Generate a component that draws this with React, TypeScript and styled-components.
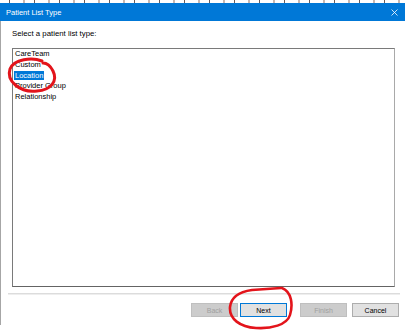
import styled, { createGlobalStyle } from 'styled-components'

const GlobalStyle = createGlobalStyle`
  html, body {
    margin: 0;
    padding: 0;
    background: #ffffff;
  }
  body {
    font-family: "Liberation Sans", Arial, sans-serif;
  }
`

const items = ['CareTeam', 'Custom', 'Location', 'Provider Group', 'Relationship']
const selected = 'Location'

const Screen = styled.div`
  position: relative;
  width: 405px;
  height: 330px;
  overflow: hidden;
  background: #ffffff;
`

const BehindStrip = styled.div`
  height: 3px;
  background: repeating-linear-gradient(
    90deg,
    #ffffff 0px,
    #ffffff 9px,
    #6b5a55 9px,
    #6b5a55 10px,
    #ffffff 10px,
    #ffffff 23px,
    #c9b8b0 23px,
    #c9b8b0 25px
  );
`

const TitleBar = styled.div`
  height: 18px;
  background: #0078d7;
  display: flex;
  align-items: center;
  justify-content: space-between;
  padding: 0 6px;
`

const Title = styled.span`
  color: #ffffff;
  font-size: 7.5px;
`

const CloseIcon = styled.svg`
  width: 7px;
  height: 7px;
  margin-right: 1px;
`

const Dialog = styled.div`
  height: 304px;
  border-left: 1px solid #a6a6a6;
  display: flex;
  flex-direction: column;
`

const Prompt = styled.div`
  font-size: 7.8px;
  line-height: 10px;
  color: #000000;
  margin: 8px 0 0 11px;
`

const ListBox = styled.div`
  height: 237px;
  margin: 9px 10px 0 11px;
  border: 1px solid #7a7a7a;
  border-right-color: #a9a9a9;
  border-bottom-color: #646464;
  display: flex;
  flex-direction: column;
  padding-top: 0px;
`

const Item = styled.div`
  height: 10.8px;
  line-height: 10.8px;
  font-size: 7.5px;
  padding-left: 1px;
  color: #000000;
`

const ItemText = styled.span<{ $active?: boolean }>`
  display: inline-block;
  padding: 0 1px;
  line-height: 9.5px;
  background: ${(p) => (p.$active ? '#0078d7' : 'transparent')};
  color: ${(p) => (p.$active ? '#ffffff' : '#000000')};
`

const Separator = styled.div`
  margin: 6px 5px 0 7px;
  border-top: 1px solid #dcdcdc;
  border-bottom: 1px solid #eeeeee;
`

const ButtonRow = styled.div`
  display: flex;
  justify-content: flex-end;
  margin-top: 8px;
  padding-right: 6px;
`

const Button = styled.div<{ $disabled?: boolean; $default?: boolean; $gap?: number }>`
  width: 47px;
  height: 14px;
  box-sizing: border-box;
  margin-left: ${(p) => p.$gap ?? 0}px;
  display: flex;
  align-items: center;
  justify-content: center;
  font-size: 7px;
  background: ${(p) => (p.$disabled ? '#cccccc' : '#e1e1e1')};
  color: ${(p) => (p.$disabled ? '#a0a0a0' : '#000000')};
  border: 1px solid
    ${(p) => (p.$default ? '#0078d7' : p.$disabled ? '#bfbfbf' : '#adadad')};
`

const Scribble = styled.svg`
  position: absolute;
  left: 0;
  top: 0;
  width: 405px;
  height: 330px;
  pointer-events: none;
`

export default function App() {
  return (
    <>
      <GlobalStyle />
      <Screen>
        <BehindStrip />
        <TitleBar>
          <Title>Patient List Type</Title>
          <CloseIcon viewBox="0 0 7 7">
            <path d="M0.5 0.5 L6.5 6.5 M6.5 0.5 L0.5 6.5" stroke="#ffffff" strokeWidth="0.8" />
          </CloseIcon>
        </TitleBar>
        <Dialog>
          <Prompt>Select a patient list type:</Prompt>
          <ListBox>
            {items.map((name) => (
              <Item key={name}>
                <ItemText $active={name === selected}>{name}</ItemText>
              </Item>
            ))}
          </ListBox>
          <Separator />
          <ButtonRow>
            <Button $disabled>Back</Button>
            <Button $default $gap={2}>Next</Button>
            <Button $disabled $gap={13}>Finish</Button>
            <Button $gap={5}>Cancel</Button>
          </ButtonRow>
        </Dialog>

        {/* red pen marks drawn over the dialog */}
        <Scribble viewBox="0 0 405 330">
          <path
            d="M42 61 C32 57, 14 59, 10 69 C6 81, 20 93, 37 91 C51 90, 58 81, 53 71 C50 65, 46 63, 43 63"
            fill="none"
            stroke="#e3141b"
            strokeWidth="3"
            strokeLinecap="round"
          />
          <path
            d="M282 288 C292 292, 293 305, 290 315 C287 325, 271 329, 256 328 C240 327, 229 319, 230 307 C231 298, 238 292, 252 290 L281 288"
            fill="none"
            stroke="#e3141b"
            strokeWidth="2.6"
            strokeLinecap="round"
          />
        </Scribble>
      </Screen>
    </>
  )
}
